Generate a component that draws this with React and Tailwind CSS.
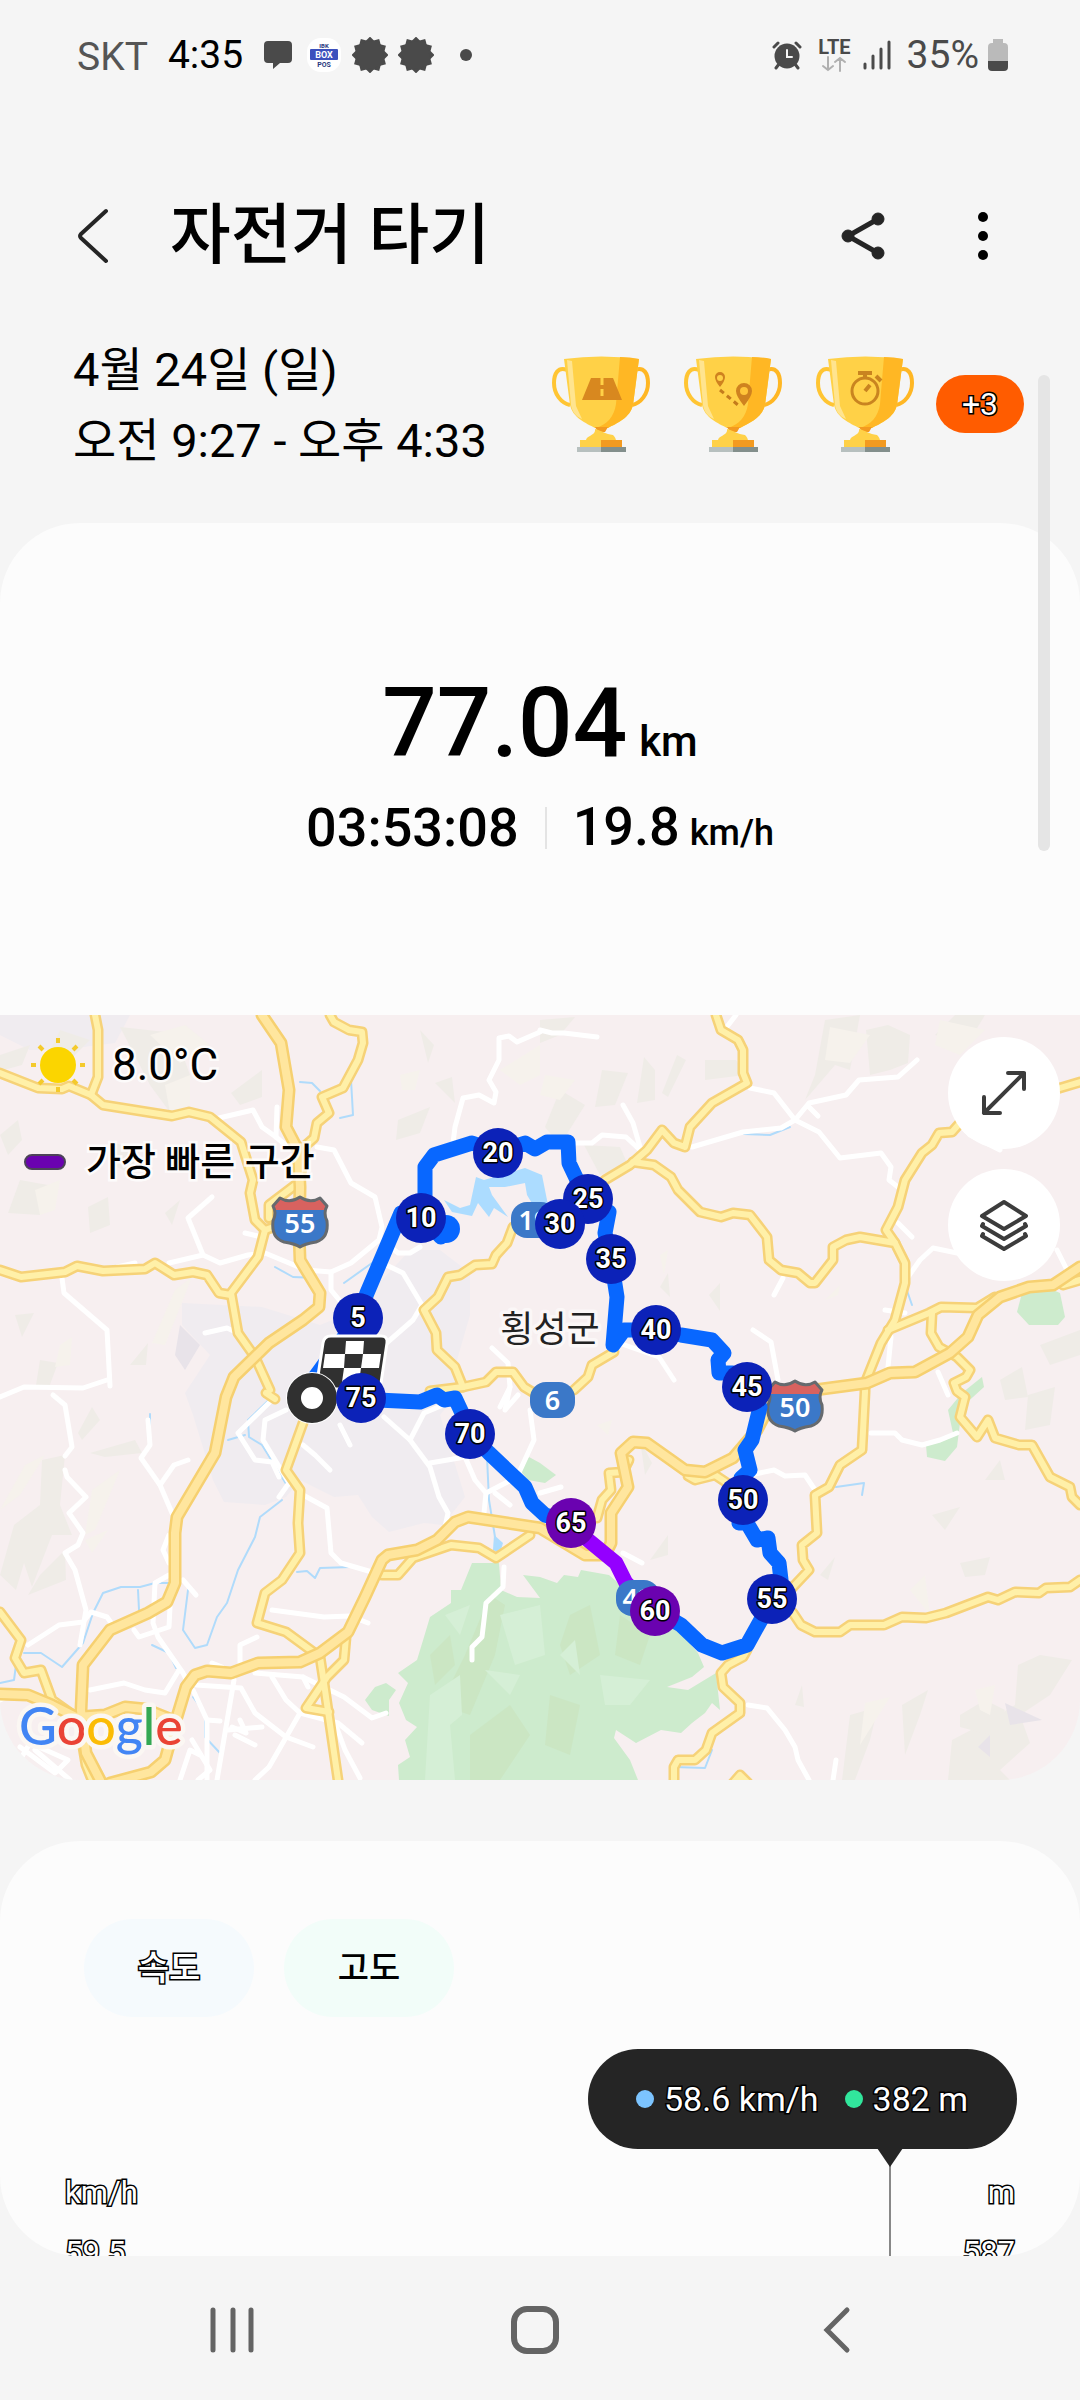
import { useState } from 'react';
import clsx from 'clsx';

const outlined = 'text-white [-webkit-text-stroke:3px_#000] [paint-order:stroke_fill]';
const halo = '[-webkit-text-stroke:5px_#ffffffcc] [paint-order:stroke_fill]';

// Map geometry, in a 1080 x 765 canvas
const terrain = [
  '0,120 18,105 22,125 8,140', '120,12 175,18 190,60 172,100 150,70', '60,15 90,25 70,45 50,35',
  '231,78 262,55 262,82 240,90', '115,128 140,135 130,158 112,150', '20,165 48,170 40,200 8,198',
  '88,192 108,182 110,210 90,218', '165,198 180,185 172,210', '428,48 420,15 434,30', '435,68 452,62 455,88',
  '398,105 430,92 420,118 396,125', '40,345 58,348 48,375 36,370', '15,300 34,298 22,322', '130,350 148,328 146,350',
  '78,418 92,392 100,405 82,425', '90,438 135,425 142,438 105,442', '42,445 65,440 60,490 72,520 52,520 32,572 24,548 16,575 0,560 14,510 40,490',
  '40,560 65,535 66,565 28,580', '540,5 575,2 560,20 540,28', '602,55 628,58 615,90 595,92', '644,42 655,55 655,85 637,88',
  '677,40 686,45 668,82 662,78', '705,45 736,45 745,60 705,65', '825,5 860,0 850,55 835,50 805,85 815,60', '866,15 888,10 910,20 908,48 890,55 870,60',
  '560,75 585,90 560,130 545,112', '584,130 620,132 628,150 600,160', '660,272 668,258 670,282', '709,280 720,268 720,296',
  '1010,85 1030,72 1042,95 1022,92', '935,20 955,0 985,0 968,28', '1000,365 1022,352 1028,382 1005,385', '1040,330 1080,315 1080,340 1050,350',
  '1028,380 1055,372 1050,410 1025,415', '985,465 1000,445 1005,465', '932,500 960,492 945,515', '960,548 990,542 985,560 965,562',
  '1018,650 1040,640 1072,645 1050,680 1020,700 1030,728 1000,755 1010,765 948,765 952,725 990,705 1015,690',
  '960,700 985,685 1005,695 990,720 960,712', '850,700 878,692 870,725 855,765 842,765', '902,690 928,675 920,700 905,740',
  '820,560 835,542 828,565', '795,690 802,670 804,692', '640,425 652,448 645,460', '650,545 668,520 668,540', '0,40 30,30 22,50 0,56',
];
const terrainLight = [
  '150,20 185,10 210,30 180,48', '165,70 190,60 190,90 170,98', '60,330 72,322 70,350 55,352', '500,55 540,30 540,60 520,70',
  '35,175 60,165 55,195 40,200', '175,275 192,262 165,330 152,328', '25,450 45,440 20,480 0,495', '92,475 120,455 95,515 85,520',
  '85,525 108,515 92,538', '400,60 420,55 415,75 402,75', '545,60 575,65 560,85 540,80', '830,12 870,20 850,48 825,45',
  '940,5 985,15 960,40 935,30', '865,688 890,682 860,730', '975,675 995,670 990,700 980,695', '910,575 925,560 930,600',
  '660,240 668,235 664,260', '825,285 840,270 838,280', '597,410 612,405 608,420',
];
const purple = ['1005,688 1042,705 1010,710', '978,732 990,720 990,742', '180,310 200,330 185,355 175,340'];

const parks = [
  '472,548 461,575 451,575 451,588 430,602 424,622 417,645 398,658 408,668 399,688 406,705 417,712 405,725 410,742 398,750 399,765 638,765 630,745 614,723 616,715 636,728 661,715 681,718 692,708 705,698 712,688 720,695 716,658 688,675 667,672 692,662 704,652 698,638 678,615 654,602 623,572 609,560 581,555 578,562 564,560 557,568 540,562 523,560 540,583 517,582 501,575 499,548',
  '365,685 375,672 386,668 396,675 389,685 389,701 372,695',
  '520,455 529,442 540,448 556,460 545,468 528,465',
  '1022,278 1053,275 1060,278 1065,302 1058,310 1029,310 1017,297',
  '926,430 953,418 948,395 962,378 982,362 984,372 962,392 957,432 945,446 927,442',
];
const parkDark = [
  '490,580 505,590 495,640 470,700 440,690 465,640', '570,600 590,590 600,640 570,660 560,630', '470,720 510,690 530,720 500,765 470,765',
  '620,600 650,620 640,650 615,640', '550,680 580,690 570,740 545,730', '430,640 450,620 455,650 435,670',
];
const parkLight = [
  '430,680 460,660 462,700 450,710 455,765 425,765', '500,600 540,590 545,640 515,650', '600,660 650,665 630,690 605,690',
  '560,640 575,625 580,660', '485,655 520,660 510,680', '445,600 470,590 460,620',
];

const lake = '444,185 460,193 470,190 476,162 484,165 525,153 542,160 548,190 536,195 527,180 525,168 505,172 489,172 492,180 508,202 494,193 489,202 478,188 472,201 452,197';
const town = '182,288 262,292 320,310 345,300 385,262 410,235 440,235 470,258 470,300 455,352 463,372 440,400 465,482 443,510 424,508 389,517 372,502 358,480 334,482 300,465 286,482 265,490 224,487 213,465 193,400 185,378 210,340 182,310';

const rivers = [
  '282,485 260,502 255,522 238,555 227,588 217,602 207,630 195,633 183,615 188,575',
  '169,568 155,568 140,572 121,572 103,578 93,598 83,628 62,652 41,638 24,638', '138,575 139,595',
  '272,382 248,405 249,422 262,430 288,472', '297,557 307,556 315,563 320,553 351,552', '152,630 169,638 176,653',
  '193,682 205,698 205,722 220,738', '487,442 489,485 496,528', '150,399 150,412', '300,67 312,68 320,76',
  '351,65 353,100 340,103', '275,252 293,262 317,263', '372,248 344,268', '692,132 703,129', '744,119 770,120 790,112',
  '836,472 864,468 862,480', '850,614 870,612', '674,752 705,753 712,735', '0,668 14,665 16,650', '228,425 245,420',
  '540,203 560,215', '905,270 912,290',
];

const streets = [
  '219,103 253,95 262,112 276,122 288,132', '277,92 276,122', '540,17 517,27 509,21 499,23 499,45 489,65 496,77 494,88 479,80 463,83 455,112 453,128',
  '317,132 334,135 351,168 375,182 382,212 379,225 351,248 331,257 306,255 265,238 248,240 220,248 203,240 169,248',
  '212,182 188,203 203,240', '382,225 398,238 410,238 420,232', '331,257 331,275 345,292', '382,248 403,258 422,290 413,305 382,332',
  '62,263 64,278 107,315 110,371', '0,382 24,372 83,373 107,365', '205,318 227,313 238,318', '245,218 262,222', '117,252 135,248',
  '492,333 508,348 510,372 500,392', '540,15 552,18 564,18 597,22', '736,0 726,13', '750,73 774,78 795,105 819,117 840,143 881,138 891,152 889,165 898,172',
  '692,132 743,117 781,113 795,105 809,88 846,80 859,65 898,62 917,45', '809,92 818,101', '574,128 592,128 602,120 626,122 640,135',
  '623,90 633,108 640,132', '774,280 783,263', '898,208 912,222', '908,262 920,245 933,233 957,238', '1057,235 1067,255', '960,110 970,120 1000,135',
  '753,315 771,327 778,365', '619,328 659,342 674,365', '891,322 888,352', '885,295 905,298', '938,357 948,380',
  '871,418 895,418 902,425 922,430 940,425 957,418', '750,460 774,455 785,461 805,460 815,475', '540,478 561,472', '623,538 642,548',
  '748,690 767,693 785,715 795,732 798,745 809,765', '836,745 833,765', '53,380 65,390 72,432 65,441', '65,455 67,462 86,482 69,498 83,518 78,530 65,538 75,555 86,595 80,630',
  '148,405 150,430 141,443 160,470 172,498', '160,470 174,450 188,445', '169,520 163,535 169,548', '28,630 59,610 83,607 91,597 107,602 114,612',
  '183,565 196,580', '169,560 155,568 153,608 158,622 183,658 188,668', '134,615 139,622 169,612 170,592', '90,675 124,668 145,675 165,678 179,655',
  '272,595 324,602 350,601 368,608', '303,480 327,493 331,538 341,548 372,557', '286,395 265,405 263,425 289,468 279,482',
  '275,382 238,418 255,445 272,447 279,462', '303,430 315,440 330,455', '340,410 350,430', '384,402 410,425 430,452 439,482 448,498 445,512',
  '410,425 424,398 448,388', '430,448 465,442 475,465 486,478 484,498', '486,478 517,462 534,425 530,395', '495,478 510,490',
  '504,552 503,572 486,588 482,622 472,632 472,645', '196,670 241,673 255,698 286,722 313,732', '234,665 217,765', '193,675 207,705 207,765',
  '255,658 303,662 344,682 372,703 386,698', '272,662 286,685 300,698 269,752 255,765', '300,698 338,708 362,728', '257,622 240,630 240,648',
  '335,708 345,735 360,763', '303,662 308,672', '207,705 220,706', '228,715 262,712', '235,720 255,730', '180,765 190,735 200,740', '192,725 210,755 198,765',
  '20,732 55,758 68,745 30,728 20,745', '35,735 70,765', '10,680 0,685', '510,372 505,395 518,380', '240,705 246,718 232,712', '212,648 222,652',
];

const roads = [
  '95,0 98,15 98,62 91,80', '0,58 38,73 62,74 69,71 91,80 103,90 172,101 189,97 210,102 241,127 253,165 250,178 255,205 265,215 258,242 231,278 238,318 255,342 270,375',
  '265,215 285,208', '298,168 269,190 269,203', '0,255 21,262 65,257 77,251 103,256 145,254 155,248 174,260 193,257 207,260 219,278 231,280',
  '330,0 334,7 349,15 362,17 363,28 358,45 343,73 322,82 329,98 317,108 314,123 306,130 299,170',
  '513,212 507,228 496,240 492,249 475,250 460,260 448,262 438,282 424,295 436,318 437,335 455,352 463,372 486,367 496,357 513,357 524,372 534,378', '463,372 430,376',
  '574,375 588,362 592,350 614,337', '716,0 721,15 738,25 743,35 743,58 747,68 712,88 690,112 685,132 674,128 662,115 647,135 630,150 605,165',
  '793,598 801,610 815,617 840,617 850,610 884,610 902,602 926,603 946,598 988,582 998,585 1015,577 1039,578 1046,573 1070,572 1080,565',
  '633,147 654,150 671,162 678,175 700,197 721,202 733,198 750,200 767,222 769,245 781,255 798,258 810,268 815,268 833,245 833,232 846,225 860,222 895,228 905,248 905,268 895,305 881,328 865,368 865,377 862,435 840,450 829,472 815,480 817,518 802,530 803,545 809,555 793,572 775,590',
  '1080,67 1060,73 1000,90 960,108 952,117 939,118 932,130 922,138 905,165 898,192 886,215 895,228',
  '888,315 929,298 941,292 977,293 995,282', '932,298 931,318 939,332 957,342 970,355 966,362 954,368 957,376 965,382 960,402 977,422 988,405 995,423 1019,430 1032,430 1050,462 1070,472 1072,482 1080,490',
  '1063,270 1080,265', '747,635 743,642 728,650 721,658 723,672 740,688 740,698 712,718 706,735 695,745 678,745 674,752 674,765', '733,768 740,760 748,768',
  '597,503 602,485 611,475 609,458 623,457 629,445', '688,461 695,465 715,460 727,468',
  '303,408 286,455 300,475 298,508 300,538 282,565 265,578 257,608 286,617 320,642 325,675 338,765', '346,622 344,645 327,662 306,693 329,697',
  '382,560 398,560 413,543 451,530 479,533 496,543 530,520', '0,597 21,625 15,643 24,658 41,655 52,685 76,702', '81,720 86,750 92,765', '266,378 275,384',
];
const highways = [
  '262,0 281,28 289,75 286,112 298,135 300,172 299,218 300,245 320,278 319,292 303,305 269,328 234,362 226,382 215,438 177,502 175,518 175,568 167,587 148,598 110,615 83,650 81,695 86,738 100,765',
  '0,679 28,680 52,690 76,702 105,700 125,692 145,694 170,704',
  '110,768 151,757 165,745 176,705 186,672 195,660 207,656 231,658 258,648 300,647 320,638 348,617 365,582 382,545 388,540 417,535 437,525 455,507 468,502 540,513 585,540 605,540 611,528 611,498 628,472 621,438 633,427 647,428 671,445 685,455 705,457 733,443 757,415 770,390 790,378 822,374 867,368 890,358 915,357 950,338 968,322 978,300 1000,282 1029,272 1053,270 1080,252',
];

const route = '309,372 312,366 318,358 358,303 367,278 401,198 420,208 451,213 441,222 425,205 425,152 434,140 472,128 498,137 525,128 535,134 547,127 568,127 569,148 578,167 588,185 609,197 605,218 611,244 617,282 613,330 624,315 656,315 681,320 712,325 724,338 718,345 719,358 733,358 747,371 760,392 752,425 745,435 750,455 741,463 739,508 747,508 757,525 768,523 770,538 779,548 781,565 772,585 747,630 722,638 702,630 681,610 655,595';
const routeEnd = '571,508 545,500 532,488 525,472 489,438 470,419 462,398 455,383 444,385 437,380 420,387 335,383';

const markers = [
  { km: 5, x: 358, y: 303 }, { km: 10, x: 421, y: 203 }, { km: 20, x: 498, y: 138 }, { km: 25, x: 588, y: 184 },
  { km: 30, x: 560, y: 209 }, { km: 35, x: 611, y: 244 }, { km: 40, x: 656, y: 315 }, { km: 45, x: 747, y: 372 },
  { km: 50, x: 743, y: 485 }, { km: 55, x: 772, y: 584 }, { km: 60, x: 655, y: 596, fast: true },
  { km: 65, x: 571, y: 508, fast: true }, { km: 70, x: 470, y: 419 },
];

function Lines({ items, ...props }) {
  return (
    <g fill="none" strokeLinecap="round" strokeLinejoin="round" {...props}>
      {items.map((points) => <polyline key={points} points={points} />)}
    </g>
  );
}

function Areas({ items, fill }) {
  return <g fill={fill}>{items.map((points) => <polygon key={points} points={points} />)}</g>;
}

function Marker({ km, x, y, fast }) {
  return (
    <g>
      <circle cx={x} cy={y} r="25" fill={fast ? '#6a02b0' : '#0c22b8'} />
      <text x={x} y={y + 9} textAnchor="middle" fontSize="27" fontWeight="700" fill="#fff" stroke="#000" strokeWidth="3" strokeLinejoin="round" paintOrder="stroke">{km}</text>
    </g>
  );
}

function Interstate({ x, y, label }) {
  return (
    <g transform={`translate(${x} ${y})`}>
      <path d="M-20-24q10 6 20-1 10 7 20 1l7 8q-4 7 0 15 2 17-11 21Q4 22 0 25q-4-3-16-5-13-4-11-21 4-8 0-15z" fill="#3b78c8" />
      <path d="M-20-24q10 6 20-1 10 7 20 1l7 8-3 4h-48l-3-4z" fill="#d8625f" />
      <path d="M-20-24q10 6 20-1 10 7 20 1l7 8q-4 7 0 15 2 17-11 21Q4 22 0 25q-4-3-16-5-13-4-11-21 4-8 0-15z" fill="none" stroke="#666a6e" strokeWidth="3" strokeLinejoin="round" />
      <text y="11" textAnchor="middle" fontSize="27" fontWeight="600" fontFamily="Noto Sans" fill="#fff">{label}</text>
    </g>
  );
}

function RouteSign({ x, y, label, width }) {
  return (
    <g>
      <rect x={x} y={y} width={width} height="36" rx="16" fill="#3b78c8" />
      <text x={x + width / 2} y={y + 28} textAnchor="middle" fontSize="27" fontWeight="600" fontFamily="Noto Sans" fill="#fff">{label}</text>
    </g>
  );
}

function RouteMap() {
  return (
    <svg viewBox="0 0 1080 765" preserveAspectRatio="xMidYMid slice" className="block w-full bg-[#f7eff0]" role="img" aria-label="횡성군">
      <polygon points="0,0 130,0 115,28 60,35 30,35 0,20" fill="#f0ecf0" />
      <polygon points={town} fill="#f0ecf0" />
      <Areas items={terrain} fill="#efece7" />
      <Areas items={terrainLight} fill="#f6f2ec" />
      <Areas items={purple} fill="#e8e3e9" />
      <Areas items={parks} fill="#cdebcd" />
      <Areas items={parkDark} fill="#cbe6c3" />
      <Areas items={parkLight} fill="#d5efd6" />
      <polygon points={lake} fill="#acdcff" />
      <polygon points="494,520 503,528 500,538 493,535" fill="#acdcff" />
      <Lines items={rivers} stroke="#b0dbfb" strokeWidth="2" />
      <Lines items={streets} stroke="#fff" strokeWidth="5" />
      <Lines items={roads} stroke="#f6d278" strokeWidth="11" />
      <Lines items={roads} stroke="#fff0a8" strokeWidth="6" />
      <Lines items={highways} stroke="#f6d070" strokeWidth="13" />
      <Lines items={highways} stroke="#ffe69e" strokeWidth="8" />

      <RouteSign x={530} y={367} width={45} label="6" />
      <RouteSign x={511} y={187} width={46} label="19" />
      <Interstate x={300} y={207} label="55" />
      <Interstate x={795} y={391} label="50" />
      <text x="550" y="327" textAnchor="middle" fontSize="36" fill="#222" stroke="#fbf7f7" strokeWidth="7" strokeLinejoin="round" paintOrder="stroke">횡성군</text>

      <Lines items={[route, routeEnd]} stroke="#0867ff" strokeWidth="15" strokeLinecap="butt" />
      <path d="M294 373l10-12 14-9v18z" fill="#0867ff" />
      <circle cx="446" cy="214" r="14" fill="#0867ff" />
      <polyline points="655,596 626,568 616,548 588,525 571,508" fill="none" stroke="#9400ff" strokeWidth="15" strokeLinejoin="round" />
      <RouteSign x={616} y={565} width={44} label="42" />

      {markers.map((marker) => <Marker key={marker.km} {...marker} />)}

      {/* finish flag */}
      <path d="M331 321h50q7 0 6 7l-6 40q-1 6-7 6h-58q3-20 7-46 1-7 8-7z" fill="#303030" stroke="#fff" strokeWidth="3" />
      <path d="M346 326h18l-1 13h-18zM325 339h20l-1 14h-21zM363 339h18l-2 14h-18zM344 353h17l-2 14h-17z" fill="#fff" />
      <circle cx="312" cy="383" r="26" fill="#fff" />
      <circle cx="312" cy="383" r="18" fill="none" stroke="#303030" strokeWidth="14" />
      <Marker km={75} x={361} y={383} />

      <text x="19" y="730" fontSize="52" fontFamily="Lato, sans-serif" fontWeight="500" stroke="#fbf7f3" strokeWidth="9" strokeLinejoin="round" paintOrder="stroke">
        <tspan fill="#4285f4">G</tspan>
        <tspan fill="#ea4335">o</tspan>
        <tspan fill="#fbbc05">o</tspan>
        <tspan fill="#4285f4">g</tspan>
        <tspan fill="#34a853">l</tspan>
        <tspan fill="#ea4335">e</tspan>
      </text>
    </svg>
  );
}

function Trophy({ children }) {
  return (
    <svg viewBox="0 0 98 96" className="w-[98px]" aria-hidden="true">
      <path d="M15 14C6 10 2 18 2 27c0 11 7 20 16 22" fill="none" stroke="#ffc533" strokeWidth="4" />
      <path d="M83 14c9-4 13 4 13 13 0 11-7 20-16 22" fill="none" stroke="#ffb724" strokeWidth="4" />
      <path d="M12 3q37-5 75 0l-6 46c-3 13-16 18-25 23H43c-9-5-22-10-25-23z" fill="#ffd147" />
      <path d="M68 1q10 0 19 2l-6 46c-3 13-16 18-25 23H43c12-3 19-11 21-24z" fill="#ffb724" />
      <path d="M15 4l5 1 4 45 6 13c-7-3-10-8-11-14z" fill="#ffe48f" />
      <path d="M43 71h13l-3 5h-7z" fill="#f39a20" />
      <path d="M43 73c8 2 10 5 18 6 2 2 3 4 3 6H34c0-6 10-5 9-12z" fill="#ffd147" />
      <path d="M28 84h21v8H28z" fill="#ffd147" />
      <path d="M49 84h21v8H49z" fill="#f39a20" />
      <path d="M25 91h24v5H25z" fill="#b7c0bf" />
      <path d="M49 91h25v5H49z" fill="#838f8c" />
      {children}
    </svg>
  );
}

function Burst() {
  return (
    <svg viewBox="-18 -18 36 36" className="size-9" aria-hidden="true">
      {[0, 30, 60].map((turn) => <rect key={turn} x="-13" y="-13" width="26" height="26" transform={`rotate(${turn + 15})`} fill="#4a4a4a" />)}
    </svg>
  );
}

function StatusBar() {
  return (
    <div className="flex h-[110px] shrink-0 items-center justify-between pr-[72px] pl-[77px] text-[39px] leading-none text-[#4a4a4a]">
      <div className="flex items-center">
        <span className="mr-5 pt-1 text-[#555]">SKT</span>
        <span className="mr-5 text-black">4:35</span>
        <svg viewBox="0 0 30 30" className="mr-[14px] size-[30px]" aria-hidden="true">
          <path d="M5 1h20q4 0 4 4v14q0 4-4 4h-8l-7 6v-6H5q-4 0-4-4V5q0-4 4-4z" fill="#4a4a4a" />
        </svg>
        <svg viewBox="0 0 34 34" className="mr-[11px] size-[34px]" aria-hidden="true">
          <rect width="34" height="34" rx="14" fill="#fff" />
          <rect x="3" y="11" width="28" height="11" rx="1" fill="#3c50bd" />
          <g fontWeight="700" textAnchor="middle">
            <text x="17" y="10" fontSize="6" fill="#28387e">IBK</text>
            <text x="17" y="20" fontSize="9" fill="#fff">BOX</text>
            <text x="17" y="29" fontSize="7" fill="#28387e">POS</text>
          </g>
        </svg>
        <span className="flex gap-[10px]"><Burst /><Burst /></span>
        <span className="ml-[26px] size-3 rounded-full bg-[#4a4a4a]" />
      </div>
      <div className="flex items-center">
        <svg viewBox="0 0 30 30" className="mr-4 size-[30px]" fill="none" stroke="#4a4a4a" strokeWidth="4" strokeLinecap="round" aria-hidden="true">
          <circle cx="15" cy="16" r="12.500" fill="#4a4a4a" stroke="none" />
          <path d="M2 7l4-4M28 7l-4-4" strokeWidth="3" />
          <path d="M7 24l-3 4M23 24l3 4" strokeWidth="3" />
          <path d="M15 10v7h5" stroke="#f5f5f5" strokeWidth="2" />
        </svg>
        <div className="mr-3 flex flex-col items-center">
          <span className="text-[20px] leading-[18px] font-bold">LTE</span>
          <svg viewBox="0 0 24 16" className="h-4 w-6" fill="none" stroke="#b0b0b0" strokeWidth="2" strokeLinecap="round" aria-hidden="true">
            <path d="M6 1v13M1 10l5 4 5-4M18 15V2M13 6l5-4 5 4" />
          </svg>
        </div>
        <svg viewBox="0 0 28 30" className="mr-4 h-[30px] w-7" stroke="#4a4a4a" strokeWidth="3" strokeLinecap="round" aria-hidden="true">
          <path d="M2 28v-4M10 28V16M18 28V9M26 28V2" />
        </svg>
        <span className="mr-[9px]">35%</span>
        <svg viewBox="0 0 20 32" className="h-8 w-5" aria-hidden="true">
          <path d="M5 0h10v4h1q4 0 4 4v15H0V8q0-4 4-4h1z" fill="#bababa" />
          <path d="M0 22h20v6q0 4-4 4H4q-4 0-4-4z" fill="#4a4a4a" />
        </svg>
      </div>
    </div>
  );
}

function Header() {
  return (
    <header className="shrink-0">
      <div className="flex h-[220px] items-center px-[72px] pt-8">
        <button type="button" aria-label="뒤로" className="mr-14">
          <svg viewBox="0 0 42 56" className="h-14 w-[42px]" fill="none" stroke="#252525" strokeWidth="4" strokeLinecap="round" strokeLinejoin="round">
            <path d="M34 3L9 26q-2 2 0 4l25 23" />
          </svg>
        </button>
        <h1 className="flex-1 text-[66px] leading-none font-medium">자전거 타기</h1>
        <button type="button" aria-label="공유" className="mr-[70px]">
          <svg viewBox="0 0 52 52" className="size-[52px]" fill="#252525" stroke="#252525">
            <path d="M42 9L12 26l30 17" fill="none" strokeWidth="5" />
            <circle cx="42" cy="9" r="6" /><circle cx="12" cy="26" r="6" /><circle cx="42" cy="43" r="6" />
          </svg>
        </button>
        <button type="button" aria-label="더보기">
          <svg viewBox="0 0 50 52" className="h-[52px] w-[50px]">
            <circle cx="25" cy="7" r="5" /><circle cx="25" cy="26" r="5" /><circle cx="25" cy="45" r="5" />
          </svg>
        </button>
      </div>
      <div className="flex h-[193px] items-start justify-between pr-14 pl-[73px]">
        <p className="pt-1 text-[47px] leading-[71px] whitespace-nowrap">
          4월 24일 (일)<br />오전 9:27 - 오후 4:33
        </p>
        <div className="flex items-center gap-[34px] pt-[26px]">
          <Trophy>
            <path d="M39 22h22l9 22H30z" fill="#d8881f" />
            <path d="M50 22v22" stroke="#ffd147" strokeWidth="3" strokeDasharray="7 4" />
          </Trophy>
          <Trophy>
            <path d="M36 31q-5-6-5-10a5 5 0 0 1 10 0q0 4-5 10zM60 50q-8-10-8-15a8 8 0 0 1 16 0q0 5-8 15z" fill="#cf821f" />
            <circle cx="36" cy="22" r="3" fill="#ffd147" />
            <circle cx="60" cy="35" r="4" fill="#ffc53a" />
            <path d="M36 34l18 15" stroke="#c47c1c" strokeWidth="3" strokeDasharray="5 4" />
          </Trophy>
          <Trophy>
            <g fill="none" stroke="#c98420" strokeWidth="3">
              <circle cx="49" cy="35" r="13" />
              <path d="M42 17h14M49 17v5M60 20l5 5M49 35l5-6" strokeWidth="4" />
            </g>
          </Trophy>
          <button type="button" className={clsx('-ml-3 h-[58px] w-[88px] rounded-full bg-[#ff5c00] text-[32px] leading-none', outlined)}>+3</button>
        </div>
      </div>
    </header>
  );
}

function Summary() {
  return (
    <div className="flex h-[492px] flex-col items-center rounded-t-[80px] bg-[#fcfcfc] pt-36 font-medium">
      <div className="flex items-baseline gap-3">
        <span className="text-[96px] leading-[112px]">77.04</span>
        <span className="text-[42px]">km</span>
      </div>
      <div className="mt-4 flex items-center">
        <span className="text-[54px] leading-[64px]">03:53:08</span>
        <span className="mx-[26px] h-[42px] w-[2px] bg-[#e4e4e4]" />
        <span className="flex items-baseline gap-[10px]">
          <span className="text-[54px] leading-[64px]">19.8</span>
          <span className="text-[36px]">km/h</span>
        </span>
      </div>
    </div>
  );
}

function MapPanel() {
  return (
    <section className="relative overflow-hidden rounded-b-[80px]">
      <RouteMap />
      <div className="absolute inset-x-0 top-0 flex items-start justify-between px-5 pt-[22px]">
        <div>
          <div className="flex items-center gap-[26px] pl-[10px]">
            <svg viewBox="-28 -28 56 56" className="size-14" aria-hidden="true">
              <circle r="18" fill="#fbd500" />
              <path d="M0-22v-5M0 22v5M-22 0h-5M22 0h5M-15-15l-4-4M15 15l4 4M15-15l4-4M-15 15l-4 4" stroke="#f4ca2c" strokeWidth="4" />
            </svg>
            <span className={clsx('text-[44px] leading-[54px]', halo)}>8.0°C</span>
          </div>
          <div className="mt-[43px] flex items-center gap-5 pl-1">
            <span className="h-4 w-[42px] rounded-lg border-2 border-[#4d4358] bg-[#6a02b0]" />
            <span className={clsx('text-[38px] leading-[52px] font-medium', halo)}>가장 빠른 구간</span>
          </div>
        </div>
        <div className="flex flex-col gap-5">
          <button type="button" aria-label="확대" className="flex size-28 items-center justify-center rounded-full bg-white">
            <svg viewBox="0 0 48 48" className="size-12" fill="none" stroke="#3c3c3c" strokeWidth="4" strokeLinecap="round" strokeLinejoin="round">
              <path d="M4 44L44 4M28 4h16v16M4 28v16h16" />
            </svg>
          </button>
          <button type="button" aria-label="지도 종류" className="flex size-28 items-center justify-center rounded-full bg-white">
            <svg viewBox="0 0 52 52" className="size-[52px]" fill="none" stroke="#3c3c3c" strokeWidth="4" strokeLinecap="round" strokeLinejoin="round">
              <path d="M26 3l22 14-22 13L4 17z" />
              <path d="M5 25l-1 2 22 13 22-13-1-2M5 35l-1 2 22 13 22-13-1-2" />
            </svg>
          </button>
        </div>
      </div>
    </section>
  );
}

function ChartPanel() {
  const [series, setSeries] = useState('speed');

  return (
    <section className="relative mt-[61px] min-h-0 flex-1 overflow-hidden rounded-[80px] bg-[#fcfcfc] pt-[78px]">
      <div className="flex gap-[30px] pl-[84px] text-[34px] leading-none font-medium">
        <button type="button" aria-pressed={series === 'speed'} onClick={() => setSeries('speed')} className={clsx('h-[98px] w-[170px] rounded-full bg-[#f5fafd]', outlined)}>속도</button>
        <button type="button" aria-pressed={series === 'altitude'} onClick={() => setSeries('altitude')} className="h-[98px] w-[170px] rounded-full bg-[#f2fdf9]">고도</button>
      </div>
      <div className="mt-8 flex justify-end pr-[63px]">
        <div className="relative flex h-[100px] w-[429px] items-center rounded-full bg-[#252525] pl-12 text-[34px] leading-none">
          <span className="mr-[10px] size-[18px] rounded-full bg-[#7cc4ff]" />
          <span className={outlined}>58.6 km/h</span>
          <span className="mr-[10px] ml-[26px] size-[18px] rounded-full bg-[#31e69c]" />
          <span className={outlined}>382 m</span>
          <svg viewBox="0 0 28 120" className="absolute top-[99px] right-[113px] h-[120px] w-7" aria-hidden="true">
            <path d="M14 10v110" stroke="#888" strokeWidth="2" />
            <path d="M1 0h26L14 19z" fill="#252525" />
          </svg>
        </div>
      </div>
      <div className={clsx('mt-[14px] flex justify-between px-[65px] text-[31px] leading-[60px]', outlined)}>
        <div>km/h<br />59.5</div>
        <div className="text-right">m<br />587</div>
      </div>
    </section>
  );
}

function NavBar() {
  return (
    <nav className="flex h-36 shrink-0 items-center justify-between pt-1 pr-[215px] pl-[205px]">
      <button type="button" aria-label="최근 앱">
        <svg viewBox="0 0 56 56" className="size-14" stroke="#646464" strokeWidth="5" strokeLinecap="round">
          <path d="M8 8v40M28 8v40M46 8v40" />
        </svg>
      </button>
      <button type="button" aria-label="홈">
        <svg viewBox="0 0 56 56" className="size-14" fill="none" stroke="#646464" strokeWidth="6">
          <rect x="7" y="7" width="42" height="42" rx="13" />
        </svg>
      </button>
      <button type="button" aria-label="이전">
        <svg viewBox="0 0 56 56" className="size-14" fill="none" stroke="#646464" strokeWidth="5" strokeLinecap="round">
          <path d="M38 8L18 28l20 20" />
        </svg>
      </button>
    </nav>
  );
}

export default function App() {
  return (
    <div className="relative flex h-screen w-full flex-col bg-[#f5f5f5] font-[Roboto,'Noto_Sans_CJK_KR',sans-serif] text-black">
      <StatusBar />
      <Header />
      <main className="flex min-h-0 flex-1 flex-col">
        <div className="shrink-0">
          <Summary />
          <MapPanel />
        </div>
        <ChartPanel />
      </main>
      <NavBar />
      <div className="absolute top-[375px] right-[30px] h-[476px] w-3 rounded-full bg-[#e5e5e5]" />
    </div>
  );
}
